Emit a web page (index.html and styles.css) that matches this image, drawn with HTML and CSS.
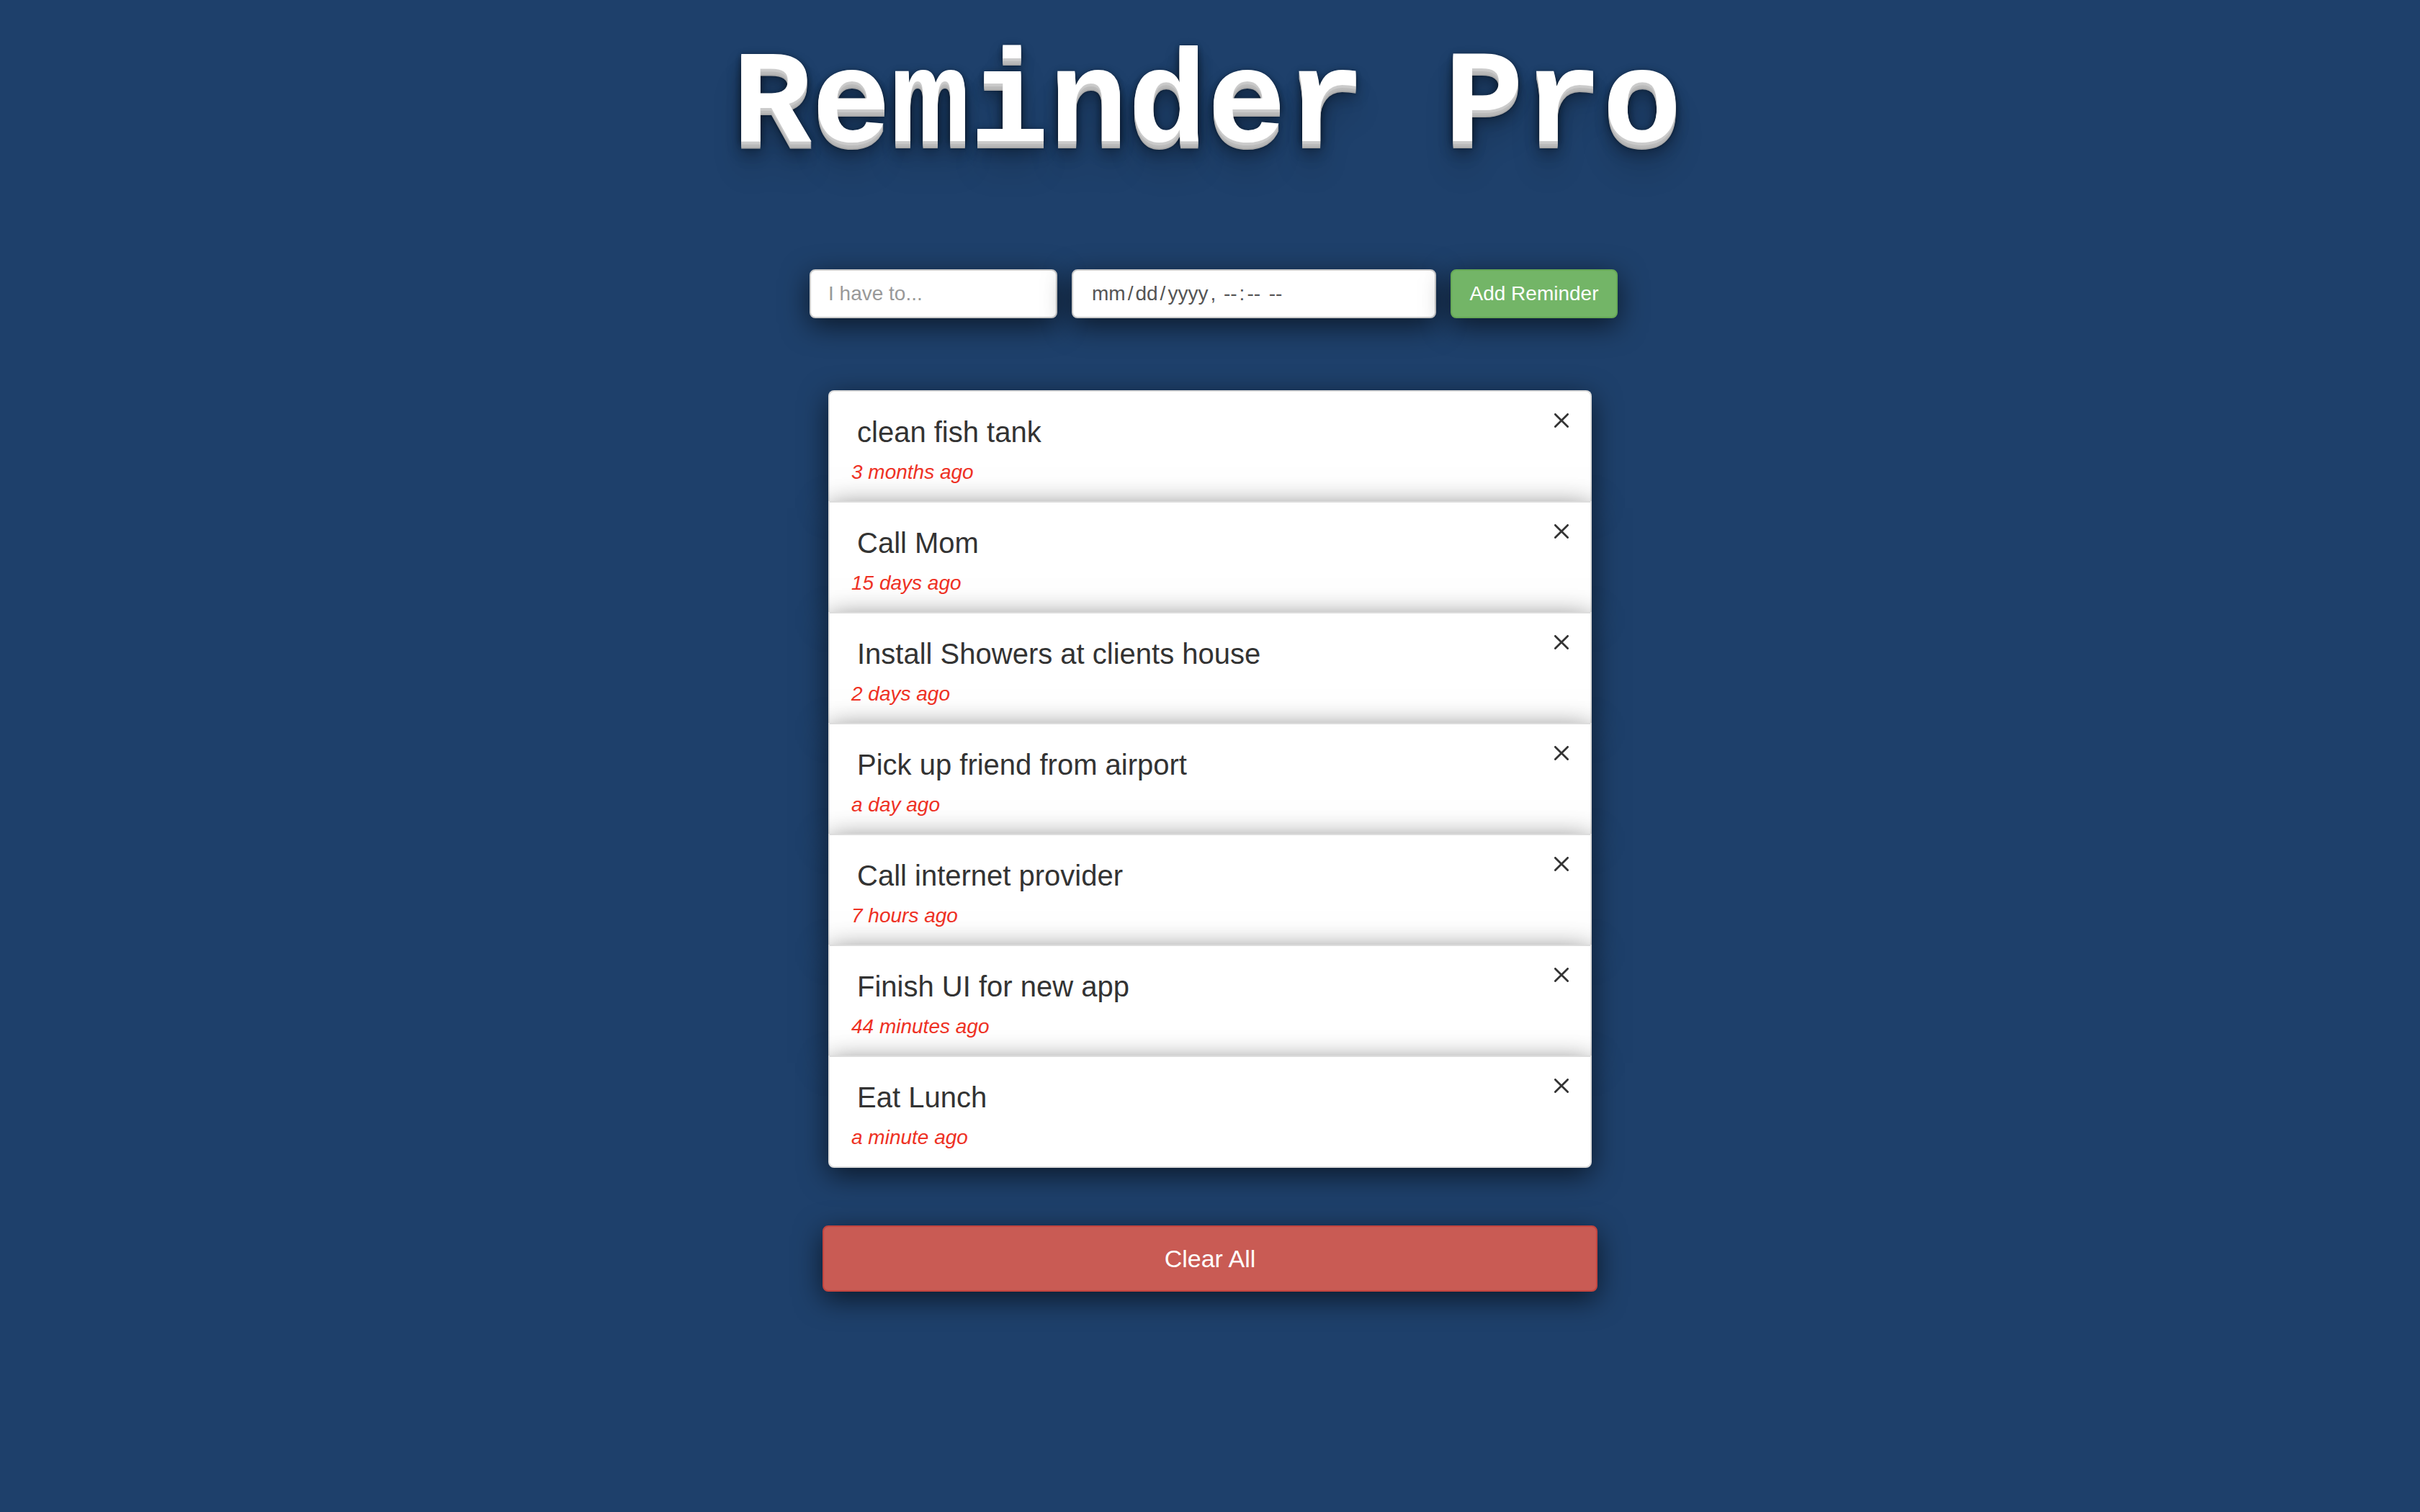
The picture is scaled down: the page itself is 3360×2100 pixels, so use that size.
FILE: index.html
```html
<!DOCTYPE html>
<html lang="en">
<head>
<meta charset="utf-8">
<title>Reminder Pro</title>
<link rel="stylesheet" href="styles.css">
</head>
<body>
<svg class="sprite" aria-hidden="true">
  <symbol id="cross" viewBox="0 0 20 20">
    <path d="M1.4 1.4 18.6 18.6M18.6 1.4 1.4 18.6" fill="none" stroke="currentColor" stroke-width="2.8" stroke-linecap="round"/>
  </symbol>
</svg>
<main class="app">
  <h1 class="title">Reminder Pro</h1>
  <form class="reminder-form">
    <input class="field task" type="text" placeholder="I have to..." aria-label="Reminder">
    <input class="field due" type="datetime-local" aria-label="Due date and time">
    <button class="btn add" type="button">Add Reminder</button>
  </form>
  <ul class="list">
    <li class="item"><div><div class="text">clean fish tank</div><em class="time">3 months ago</em></div><button class="remove" type="button" aria-label="Delete clean fish tank"><svg class="icon"><use href="#cross"/></svg></button></li>
    <li class="item"><div><div class="text">Call Mom</div><em class="time">15 days ago</em></div><button class="remove" type="button" aria-label="Delete Call Mom"><svg class="icon"><use href="#cross"/></svg></button></li>
    <li class="item"><div><div class="text">Install Showers at clients house</div><em class="time">2 days ago</em></div><button class="remove" type="button" aria-label="Delete Install Showers at clients house"><svg class="icon"><use href="#cross"/></svg></button></li>
    <li class="item"><div><div class="text">Pick up friend from airport</div><em class="time">a day ago</em></div><button class="remove" type="button" aria-label="Delete Pick up friend from airport"><svg class="icon"><use href="#cross"/></svg></button></li>
    <li class="item"><div><div class="text">Call internet provider</div><em class="time">7 hours ago</em></div><button class="remove" type="button" aria-label="Delete Call internet provider"><svg class="icon"><use href="#cross"/></svg></button></li>
    <li class="item"><div><div class="text">Finish UI for new app</div><em class="time">44 minutes ago</em></div><button class="remove" type="button" aria-label="Delete Finish UI for new app"><svg class="icon"><use href="#cross"/></svg></button></li>
    <li class="item"><div><div class="text">Eat Lunch</div><em class="time">a minute ago</em></div><button class="remove" type="button" aria-label="Delete Eat Lunch"><svg class="icon"><use href="#cross"/></svg></button></li>
  </ul>
  <button class="btn clear" type="button">Clear All</button>
</main>
</body>
</html>
```
FILE: styles.css
```css
:root {
  --shadow: 0 10px 38px rgba(0, 0, 0, 0.62);
}

* {
  box-sizing: border-box;
}

body {
  margin: 0;
  min-height: 100vh;
  background: #1e406b;
  color: #333;
  font-family: "Helvetica Neue", Helvetica, "Liberation Sans", Arial, sans-serif;
  font-size: 28px;
}

.sprite {
  display: none;
}

.app {
  display: flex;
  flex-direction: column;
  align-items: center;
  padding: 56px 24px;
}

.title {
  margin: 0 0 134px;
  padding-right: 8px;
  color: #fff;
  font-family: "Liberation Mono", monospace;
  font-size: 183px;
  font-weight: 700;
  line-height: 184px;
  text-align: center;
  text-shadow:
    0 2px 0 #ccc,
    0 4px 0 #c9c9c9,
    0 6px 0 #bbb,
    0 8px 0 #b9b9b9,
    0 10px 0 #aaa,
    0 12px 2px rgba(0, 0, 0, 0.1),
    0 0 10px rgba(0, 0, 0, 0.1),
    0 2px 6px rgba(0, 0, 0, 0.3),
    0 6px 10px rgba(0, 0, 0, 0.2),
    0 10px 20px rgba(0, 0, 0, 0.25),
    0 20px 20px rgba(0, 0, 0, 0.2),
    0 40px 40px rgba(0, 0, 0, 0.15);
}

.reminder-form {
  display: flex;
  gap: 20px;
  padding-left: 10px;
}

.field,
.btn {
  height: 68px;
  border: 2px solid #ccc;
  border-radius: 8px;
  font-family: inherit;
  font-size: 28px;
  box-shadow: var(--shadow);
}

.field {
  min-width: 0;
  padding: 0 24px;
  background: #fff;
  color: #555;
}

.task {
  width: 344px;
}

.task::placeholder {
  color: #999;
  opacity: 1;
}

.due {
  width: 506px;
}

.due::-webkit-calendar-picker-indicator {
  display: none;
}

.due::-webkit-datetime-edit-text {
  padding: 0 1px;
}

.due::-webkit-datetime-edit-month-field,
.due::-webkit-datetime-edit-day-field,
.due::-webkit-datetime-edit-year-field,
.due::-webkit-datetime-edit-hour-field,
.due::-webkit-datetime-edit-minute-field,
.due::-webkit-datetime-edit-ampm-field {
  padding: 0 2px;
}

.btn {
  padding: 0 24px;
  color: #fff;
  cursor: pointer;
}

.add {
  width: 232px;
  padding: 0;
  background: #73b567;
  border-color: #67a957;
}

.list {
  width: 100%;
  max-width: 1060px;
  margin: 100px 0 80px;
  padding: 0;
  list-style: none;
}

.item {
  display: flex;
  justify-content: space-between;
  align-items: flex-start;
  padding: 28px 30px 20px;
  border: 2px solid #ddd;
  border-bottom: 0;
  background: #fff;
  box-shadow: var(--shadow);
}

.item:first-child {
  border-radius: 8px 8px 0 0;
}

.item:last-child {
  border-bottom: 2px solid #ddd;
  border-radius: 0 0 8px 8px;
}

.text {
  margin-bottom: 8px;
  padding-left: 8px;
  font-size: 40px;
  line-height: 56px;
}

.time {
  display: block;
  color: #ee3124;
  line-height: 40px;
}

.remove {
  display: block;
  padding: 2px 0 0;
  border: 0;
  background: none;
  color: #333;
  cursor: pointer;
}

.icon {
  display: block;
  width: 20px;
  height: 20px;
}

.clear {
  width: 100%;
  max-width: 1076px;
  height: 92px;
  background: #c95b54;
  border-color: #c3453f;
  font-size: 34px;
}
```
